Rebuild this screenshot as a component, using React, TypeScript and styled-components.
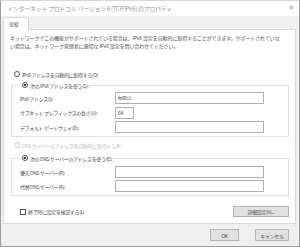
import React from "react";
import styled, { createGlobalStyle } from "styled-components";

const GlobalStyle = createGlobalStyle`
  html, body {
    margin: 0;
    padding: 0;
    width: 300px;
    height: 247px;
    overflow: hidden;
    background: #f0f0f0;
  }
  * { box-sizing: border-box; }
`;

const Window = styled.div`
  width: 300px;
  height: 247px;
  display: flex;
  flex-direction: column;
  border: 1px solid #9c9c9c;
  border-top-color: #d8d8d8;
  background: #f0f0f0;
  font-family: "Noto Sans CJK JP", "Noto Sans", sans-serif;
  font-size: 5px;
  letter-spacing: -0.35px;
  color: #4a4a4a;
`;

const TitleBar = styled.div`
  height: 15px;
  flex: none;
  display: flex;
  align-items: center;
  justify-content: space-between;
  padding: 0 5px 1px 6px;
  background: #ffffff;
`;

const TitleText = styled.span`
  font-size: 6px;
  letter-spacing: -0.3px;
  color: #999999;
  white-space: nowrap;
`;

const CloseGlyph = styled.span`
  font-family: "DejaVu Sans", sans-serif;
  font-size: 7px;
  color: #9a9a9a;
`;

const Body = styled.div`
  flex: 1;
  display: flex;
  flex-direction: column;
  padding: 1px 3px 0 2px;
`;

const TabStrip = styled.div`
  display: flex;
  height: 12px;
  flex: none;
`;

const Tab = styled.div`
  width: 26px;
  height: 13px;
  padding: 2px 0 0 5px;
  background: #ffffff;
  border: 1px solid #d9d9d9;
  border-bottom: none;
  position: relative;
  z-index: 1;
  line-height: 8px;
`;

const Panel = styled.div`
  background: #ffffff;
  border: 1px solid #d9d9d9;
  padding: 4px 6px 6px 6px;
  display: flex;
  flex-direction: column;
`;

const Description = styled.p`
  margin: 0;
  line-height: 8px;
  letter-spacing: -0.1px;
  white-space: nowrap;
`;

const RadioRow = styled.label<{ $disabled?: boolean; $top?: number }>`
  display: flex;
  align-items: center;
  gap: 2px;
  height: 10px;
  margin-top: ${(p) => p.$top ?? 0}px;
  padding-left: 4px;
  color: ${(p) => (p.$disabled ? "#c0c0c0" : "inherit")};
  white-space: nowrap;
`;

const RadioMark = styled.span<{ $checked?: boolean; $disabled?: boolean }>`
  width: 6px;
  height: 6px;
  flex: none;
  border-radius: 50%;
  border: 1px solid ${(p) => (p.$disabled ? "#cccccc" : "#555555")};
  background: ${(p) =>
    p.$checked
      ? "radial-gradient(circle, #444444 0 1.3px, #ffffff 1.6px)"
      : "#ffffff"};
`;

const Group = styled.fieldset<{ $top?: number; $bottom?: number }>`
  margin: ${(p) => p.$top ?? 0}px 0 0 1px;
  padding: 0 0 ${(p) => p.$bottom ?? 3}px 8px;
  border: 1px solid #e0e0e0;
  min-width: 0;
`;

const GroupLegend = styled.legend`
  padding: 0;
  margin-left: 2px;
  height: 10px;
  display: flex;
  align-items: center;
  gap: 2px;
  white-space: nowrap;
`;

const FieldGrid = styled.div<{ $top: number; $gap: number }>`
  display: grid;
  grid-template-columns: 95px auto;
  grid-auto-rows: 12px;
  row-gap: ${(p) => p.$gap}px;
  align-items: center;
  margin-top: ${(p) => p.$top}px;
`;

const FieldLabel = styled.span`
  white-space: nowrap;
`;

const TextBox = styled.div<{ $width: number }>`
  width: ${(p) => p.$width}px;
  height: 12px;
  border: 1px solid #b0b0b0;
  background: #ffffff;
  padding-left: 2px;
  line-height: 10px;
  color: #3a3a3a;
`;

const BottomRow = styled.div`
  display: flex;
  align-items: center;
  justify-content: space-between;
  margin-top: 10px;
  padding-left: 10px;
  height: 11px;
`;

const CheckRow = styled.label`
  display: flex;
  align-items: center;
  gap: 2px;
  white-space: nowrap;
`;

const CheckMark = styled.span`
  width: 6px;
  height: 6px;
  border: 1px solid #555555;
  background: #ffffff;
`;

const PushButton = styled.div<{ $width: number }>`
  width: ${(p) => p.$width}px;
  height: 11px;
  display: flex;
  align-items: center;
  justify-content: center;
  background: #e1e1e1;
  border: 1px solid #b4b4b4;
  white-space: nowrap;
`;

const Footer = styled.div`
  display: flex;
  justify-content: flex-end;
  gap: 16px;
  padding: 5px 7px 0 0;
  ${PushButton} {
    height: 12px;
  }
`;

export default function App() {
  return (
    <>
      <GlobalStyle />
      <Window>
        <TitleBar>
          <TitleText>インターネット プロトコル バージョン 6 (TCP/IPv6) のプロパティ</TitleText>
          <CloseGlyph>✕</CloseGlyph>
        </TitleBar>
        <Body>
          <TabStrip>
            <Tab>全般</Tab>
          </TabStrip>
          <Panel>
            <Description>
              ネットワークでこの機能がサポートされている場合は、IPv6 設定を自動的に取得することができます。サポートされていな
            </Description>
            <Description>
              い場合は、ネットワーク管理者に適切な IPv6 設定を問い合わせてください。
            </Description>

            <RadioRow $top={19}>
              <RadioMark />
              IPv6 アドレスを自動的に取得する(O)
            </RadioRow>
            <Group $top={1} $bottom={3}>
              <GroupLegend>
                <RadioMark $checked />
                次の IPv6 アドレスを使う(S):
              </GroupLegend>
              <FieldGrid $top={2} $gap={2.5}>
                <FieldLabel>IPv6 アドレス(I):</FieldLabel>
                <TextBox $width={149}>fe80::1</TextBox>
                <FieldLabel>サブネット プレフィックスの長さ(U):</FieldLabel>
                <TextBox $width={19}>64</TextBox>
                <FieldLabel>デフォルト ゲートウェイ(D):</FieldLabel>
                <TextBox $width={149} />
              </FieldGrid>
            </Group>

            <RadioRow $top={3} $disabled>
              <RadioMark $disabled />
              DNS サーバーのアドレスを自動的に取得する(B)
            </RadioRow>
            <Group $top={3} $bottom={3}>
              <GroupLegend>
                <RadioMark $checked />
                次の DNS サーバーのアドレスを使う(E):
              </GroupLegend>
              <FieldGrid $top={3} $gap={2}>
                <FieldLabel>優先 DNS サーバー(P):</FieldLabel>
                <TextBox $width={149} />
                <FieldLabel>代替 DNS サーバー(A):</FieldLabel>
                <TextBox $width={149} />
              </FieldGrid>
            </Group>

            <BottomRow>
              <CheckRow>
                <CheckMark />
                終了時に設定を検証する(L)
              </CheckRow>
              <PushButton $width={56}>詳細設定(V)...</PushButton>
            </BottomRow>
          </Panel>
          <Footer>
            <PushButton $width={29}>OK</PushButton>
            <PushButton $width={34}>キャンセル</PushButton>
          </Footer>
        </Body>
      </Window>
    </>
  );
}
